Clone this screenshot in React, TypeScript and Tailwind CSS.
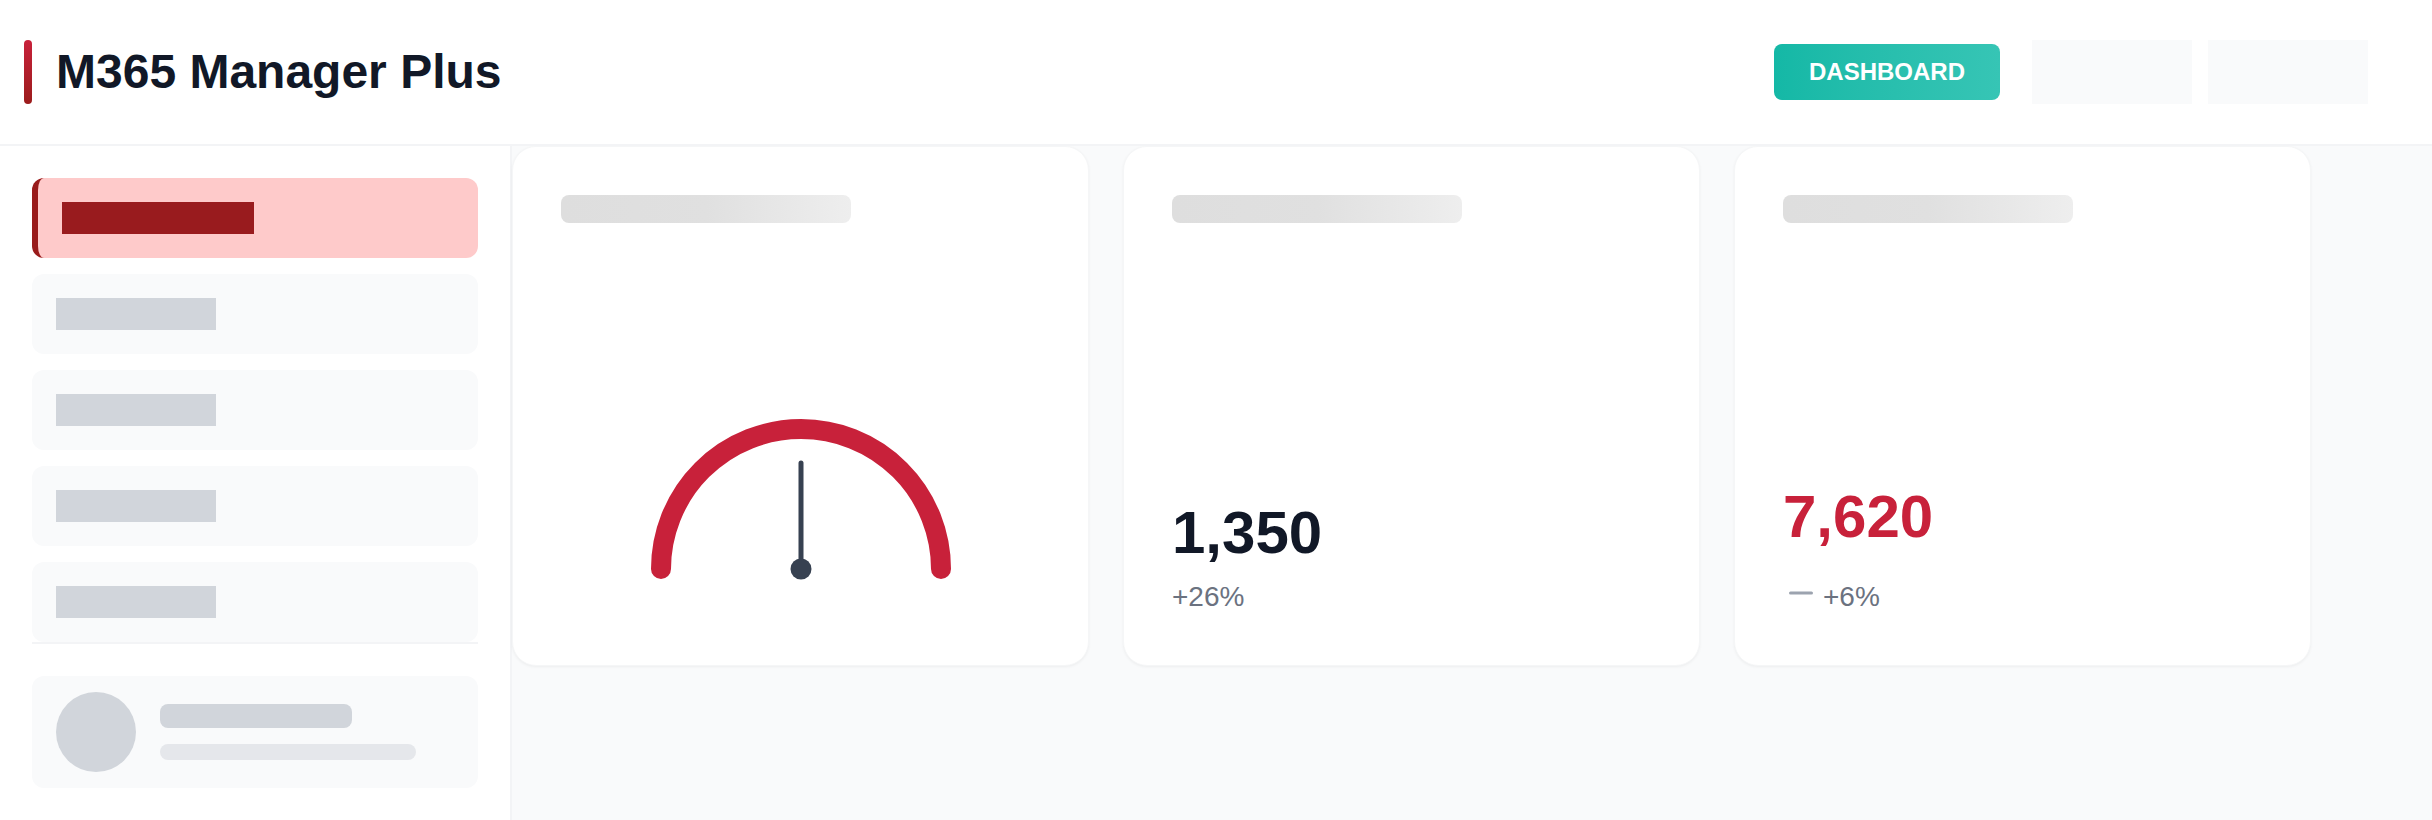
import { Minus } from "lucide-react";

function NavItem({ active }: { active?: boolean }) {
  if (active) {
    return (
      <div className="rounded-xl border-l-[6px] border-[#991b1b] bg-[#fecaca] py-6 pl-6">
        <div className="h-8 w-48 bg-[#991b1e]" />
      </div>
    );
  }
  return (
    <div className="rounded-xl bg-[#f9fafb] p-6">
      <div className="h-8 w-40 bg-[#d1d5db]" />
    </div>
  );
}

function Sidebar() {
  return (
    <aside className="flex w-[512px] shrink-0 flex-col border-r-2 border-[#f3f4f6] bg-white px-8 pt-8">
      <nav className="flex flex-col gap-4">
        <NavItem active />
        <NavItem />
        <NavItem />
        <NavItem />
        <NavItem />
      </nav>
      <div className="border-t-2 border-[#f3f4f6] pt-8">
        <div className="flex items-center gap-6 rounded-xl bg-[#f9fafb] px-6 py-4">
          <div className="h-20 w-20 rounded-full bg-[#d1d5db]" />
          <div className="flex flex-col gap-4">
            <div className="h-6 w-48 rounded-lg bg-[#d1d5db]" />
            <div className="h-4 w-64 rounded-full bg-[#e5e7eb]" />
          </div>
        </div>
      </div>
    </aside>
  );
}

function CardTitle() {
  return <div className="h-7 w-[290px] rounded-lg bg-linear-to-r from-[#dedede] via-[#e0e0e0] to-[#eeeeee]" />;
}

function Card({ children }: { children: React.ReactNode }) {
  return (
    <div className="flex h-[520px] w-[577px] shrink-0 flex-col rounded-3xl border border-[#f5f6f7] bg-white px-12 pt-12 pb-[50px] shadow-[0_1px_3px_rgba(0,0,0,0.05)]">
      <CardTitle />
      <div className="flex-1" />
      {children}
    </div>
  );
}

function Gauge() {
  return (
    <div className="flex justify-center">
      <svg width="320" height="206" viewBox="0 0 320 206" fill="none">
        <path
          d="M20 160 A140 140 0 0 1 300 160"
          stroke="#c8213a"
          strokeWidth="20"
          strokeLinecap="round"
        />
        <line x1="160" y1="54" x2="160" y2="160" stroke="#374151" strokeWidth="5" strokeLinecap="round" />
        <circle cx="160" cy="160" r="10.5" fill="#374151" />
      </svg>
    </div>
  );
}

export default function App() {
  return (
    <div className="flex h-screen flex-col bg-white font-['Liberation_Sans',Arial,sans-serif]">
      <header className="flex h-[146px] shrink-0 items-center justify-between border-b-2 border-[#f3f4f6] bg-white pl-6 pr-16">
        <div className="flex items-center gap-6">
          <div className="h-16 w-2 rounded-full bg-linear-to-b from-[#c8213a] to-[#9b1c1c]" />
          <h1 className="text-5xl font-bold text-[#111827]">M365 Manager Plus</h1>
        </div>
        <div className="flex items-center gap-8">
          <button className="flex h-14 w-[226px] items-center justify-center rounded-lg bg-linear-to-r from-[#14b8a6] to-[#36c5b5] text-2xl leading-8 font-bold text-white">
            DASHBOARD
          </button>
          <div className="flex gap-4">
            <div className="h-16 w-40 bg-[#f9fafb]" />
            <div className="h-16 w-40 bg-[#f9fafb]" />
          </div>
        </div>
      </header>
      <div className="flex flex-1 overflow-hidden">
        <Sidebar />
        <main className="flex flex-1 items-start gap-[34px] bg-[#f9fafb]">
          <Card>
            <Gauge />
          </Card>
          <Card>
            <div className="text-6xl leading-none font-bold text-[#111827]">1,350</div>
            <div className="mt-4 text-[28px] leading-9 text-[#6b7280]">+26%</div>
          </Card>
          <Card>
            <div className="text-6xl leading-none font-bold text-[#c8213a]">7,620</div>
            <div className="mt-8 flex h-9 items-center gap-1">
              <Minus size={36} strokeWidth={2} className="-mt-2 text-[#9ca3af]" />
              <span className="text-[28px] leading-9 text-[#6b7280]">+6%</span>
            </div>
          </Card>
        </main>
      </div>
    </div>
  );
}
